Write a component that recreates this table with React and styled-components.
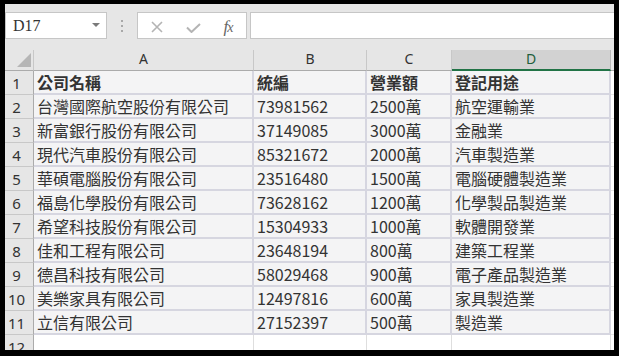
import React from "react";
import styled, { createGlobalStyle } from "styled-components";

const GlobalStyle = createGlobalStyle`
  html, body { margin: 0; padding: 0; background: #000; }
  body { width: 619px; height: 356px; overflow: hidden; }
`;

const Frame = styled.div`
  width: 619px;
  height: 356px;
  box-sizing: border-box;
  padding: 4px 5px 6px 5px;
  background: #000;
`;

const Window = styled.div`
  width: 609px;
  height: 346px;
  overflow: hidden;
  background: #fff;
  display: flex;
  flex-direction: column;
`;

const FormulaBar = styled.div`
  height: 46px;
  flex: none;
  background: #e6e6e6;
  display: flex;
  align-items: flex-start;
  padding-top: 8px;
  box-sizing: border-box;
`;

const NameBox = styled.div`
  width: 102px;
  height: 27px;
  box-sizing: border-box;
  border: 1px solid #c6c6c6;
  background: #fff;
  display: flex;
  align-items: center;
  justify-content: space-between;
  padding: 0 6px 0 7px;
  font-family: "Liberation Serif", serif;
  font-size: 16px;
  color: #333;
`;

const Caret = styled.span`
  width: 0;
  height: 0;
  border-left: 4px solid transparent;
  border-right: 4px solid transparent;
  border-top: 4px solid #7a7a7a;
  margin-bottom: 2px;
`;

const Grip = styled.div`
  width: 2px;
  height: 27px;
  margin: 0 14px;
  display: flex;
  flex-direction: column;
  justify-content: center;
  gap: 3px;
`;

const Dot = styled.span`
  width: 2px;
  height: 2px;
  background: #a8a8a8;
`;

const FxButtons = styled.div`
  width: 110px;
  height: 27px;
  box-sizing: border-box;
  border: 1px solid #c6c6c6;
  background: #fff;
  display: grid;
  grid-template-columns: 37px 36px 1fr;
  align-items: center;
  justify-items: center;
`;

const IconSlot = styled.span`
  display: flex;
  align-items: center;
  justify-content: center;
  height: 25px;
  margin-top: ${(p) => p.$dy || 0}px;
`;

const Fx = styled.span`
  font-family: "Liberation Serif", serif;
  font-style: italic;
  font-size: 17px;
  color: #666;
  line-height: 1;
  margin-top: -1px;
`;

const FxSmall = styled.span`
  font-size: 14px;
  margin-left: -1px;
`;

const FormulaInput = styled.div`
  flex: 1;
  height: 27px;
  margin-left: 3px;
  box-sizing: border-box;
  border: 1px solid #c6c6c6;
  border-right: none;
  background: #fff;
`;

const Sheet = styled.div`
  display: flex;
  flex-direction: column;
`;

const Row = styled.div`
  display: flex;
  height: ${(p) => p.$h}px;
  flex: none;
`;

const widths = [220, 113, 85, 159];

const Corner = styled.div`
  width: 29px;
  height: 21px;
  box-sizing: border-box;
  background: #e6e6e6;
  border-right: 1px solid #c8c8c8;
  border-bottom: 1px solid #ababab;
  display: flex;
  justify-content: flex-end;
  align-items: flex-end;
  padding: 0 2px 3px 0;
`;

const CornerTriangle = styled.span`
  width: 14px;
  height: 14px;
  background: #b6b6b6;
  clip-path: polygon(100% 0, 100% 100%, 0 100%);
`;

const ColHead = styled.div`
  width: ${(p) => p.$w}px;
  flex: none;
  height: 21px;
  box-sizing: border-box;
  background: ${(p) => (p.$selected ? "#d2d2d2" : "#e6e6e6")};
  border-right: 1px solid ${(p) => (p.$selected ? "#b8b8b8" : "#c8c8c8")};
  border-bottom: ${(p) => (p.$selected ? "2px solid #217346" : "1px solid #ababab")};
  display: flex;
  align-items: center;
  justify-content: center;
  padding-bottom: ${(p) => (p.$selected ? 2 : 3)}px;
  font-family: "Noto Sans", sans-serif;
  font-size: 14px;
  color: ${(p) => (p.$selected ? "#1f5e3c" : "#333")};
`;

const FillerHead = styled.div`
  flex: 1;
  height: 21px;
  box-sizing: border-box;
  background: #e6e6e6;
  border-bottom: 1px solid #ababab;
`;

const RowHead = styled.div`
  width: 29px;
  flex: none;
  box-sizing: border-box;
  background: #e6e6e6;
  border-right: 1px solid #ababab;
  border-bottom: 1px solid #c8c8c8;
  display: flex;
  align-items: center;
  justify-content: center;
  padding-right: 5px;
  padding-top: 1px;
  font-family: "Noto Sans", sans-serif;
  font-size: 15px;
  color: #333;
`;

const Cell = styled.div`
  width: ${(p) => p.$w}px;
  flex: none;
  box-sizing: border-box;
  background: ${(p) => (p.$empty ? "#fff" : "#f4f4f5")};
  border-right: ${(p) => (p.$empty ? "1px solid #dedede" : "2px solid #d6d6e0")};
  border-bottom: ${(p) => (p.$empty ? "1px solid #dedede" : "2px solid #d6d6e0")};
  padding: 0 0 0 ${(p) => p.$pad}px;
  display: flex;
  align-items: center;
  overflow: hidden;
  white-space: nowrap;
  font-family: "Noto Sans CJK TC", "Noto Sans", sans-serif;
  font-size: 16px;
  font-weight: ${(p) => (p.$bold ? 700 : 400)};
  color: #333;
`;

const Filler = styled.div`
  flex: 1;
  background: #fff;
  border-bottom: 1px solid #e4e4e4;
`;

const data = [
  ["公司名稱", "統編", "營業額", "登記用途"],
  ["台灣國際航空股份有限公司", "73981562", "2500萬", "航空運輸業"],
  ["新富銀行股份有限公司", "37149085", "3000萬", "金融業"],
  ["現代汽車股份有限公司", "85321672", "2000萬", "汽車製造業"],
  ["華碩電腦股份有限公司", "23516480", "1500萬", "電腦硬體製造業"],
  ["福島化學股份有限公司", "73628162", "1200萬", "化學製品製造業"],
  ["希望科技股份有限公司", "15304933", "1000萬", "軟體開發業"],
  ["佳和工程有限公司", "23648194", "800萬", "建築工程業"],
  ["德昌科技有限公司", "58029468", "900萬", "電子產品製造業"],
  ["美樂家具有限公司", "12497816", "600萬", "家具製造業"],
  ["立信有限公司", "27152397", "500萬", "製造業"],
];

const pads = [3, 3, 3, 3];

export default function App() {
  return (
    <>
      <GlobalStyle />
      <Frame>
        <Window>
          <FormulaBar>
            <NameBox>
              <span>D17</span>
              <Caret />
            </NameBox>
            <Grip>
              <Dot />
              <Dot />
              <Dot />
            </Grip>
            <FxButtons>
              <IconSlot $dy={1}>
                <svg width="12" height="12" viewBox="0 0 12 12">
                  <path d="M1 1 L11 11 M11 1 L1 11" stroke="#b4b4b4" strokeWidth="1.6" fill="none" />
                </svg>
              </IconSlot>
              <IconSlot $dy={2}>
                <svg width="15" height="10" viewBox="0 0 15 10">
                  <path d="M1 4.5 L5.5 9 L14 1" stroke="#b4b4b4" strokeWidth="2" fill="none" />
                </svg>
              </IconSlot>
              <IconSlot>
                <Fx>
                  f<FxSmall>x</FxSmall>
                </Fx>
              </IconSlot>
            </FxButtons>
            <FormulaInput />
          </FormulaBar>
          <Sheet>
            <Row $h={21}>
              <Corner>
                <CornerTriangle />
              </Corner>
              {["A", "B", "C", "D"].map((c, i) => (
                <ColHead key={c} $w={widths[i]} $selected={c === "D"}>
                  {c}
                </ColHead>
              ))}
              <FillerHead />
            </Row>
            {data.map((r, ri) => (
              <Row key={ri} $h={24}>
                <RowHead>{ri + 1}</RowHead>
                {r.map((v, ci) => (
                  <Cell key={ci} $w={widths[ci]} $pad={pads[ci]} $bold={ri === 0}>
                    {v}
                  </Cell>
                ))}
                <Filler />
              </Row>
            ))}
            <Row $h={24}>
              <RowHead>12</RowHead>
              {widths.map((w, ci) => (
                <Cell key={ci} $w={w} $pad={3} $empty />
              ))}
              <Filler />
            </Row>
          </Sheet>
        </Window>
      </Frame>
    </>
  );
}
